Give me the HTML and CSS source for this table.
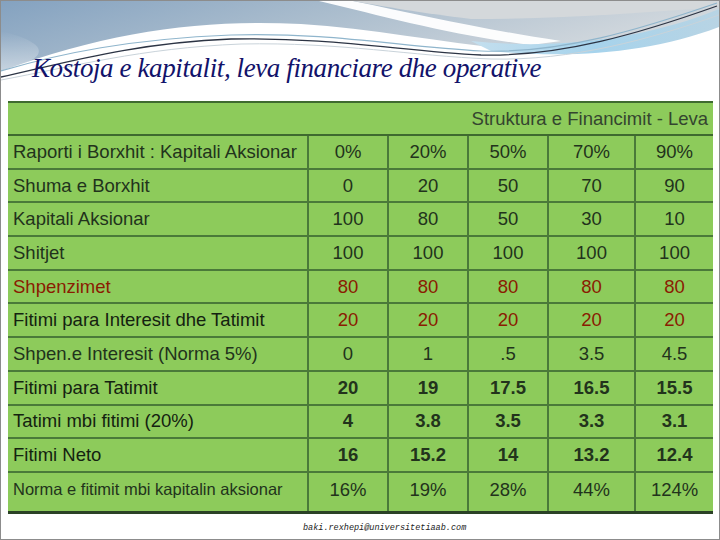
FILE: index.html
```html
<!DOCTYPE html>
<html lang="sq">
<head>
<meta charset="utf-8">
<title>Kostoja e kapitalit</title>
<link rel="stylesheet" href="styles.css">
</head>
<body>
<div class="slide">
  <header class="head">
    <svg class="swoosh" width="718" height="100" viewBox="0 0 718 100" aria-hidden="true">
      <defs>
        <linearGradient id="gTop" x1="0" y1="0" x2="1" y2="0.35">
          <stop offset="0" stop-color="#84a2c0"/>
          <stop offset="0.45" stop-color="#a9bccd"/>
          <stop offset="1" stop-color="#d6dbdf"/>
        </linearGradient>
        <linearGradient id="gFade" x1="0" y1="0" x2="0" y2="1">
          <stop offset="0" stop-color="#ffffff" stop-opacity="0"/>
          <stop offset="1" stop-color="#ffffff" stop-opacity="0.85"/>
        </linearGradient>
        <linearGradient id="gBlue" x1="0" y1="0" x2="1" y2="0">
          <stop offset="0" stop-color="#c4dfee"/>
          <stop offset="0.5" stop-color="#a6d3ec"/>
          <stop offset="1" stop-color="#b8d4e4"/>
        </linearGradient>
      </defs>
      <rect width="718" height="100" fill="#ffffff"/>
      <path d="M0,0 H718 V8 C670,40 600,52 540,50 C460,46 380,28 300,23 C200,18 110,30 0,70 Z" fill="url(#gTop)"/>
      <path d="M0,30 C40,40 60,55 0,70 Z" fill="url(#gFade)" opacity="0.5"/>
      <path d="M318,0 H352 C420,14 480,28 560,40 L530,44 C450,34 385,16 318,0 Z" fill="#ffffff" opacity="0.95"/>
      <path d="M352,0 H718 V6 C640,12 560,18 470,18 C420,12 380,5 352,0 Z" fill="#d4d8db"/>
      <path d="M470,40 C560,50 650,36 718,8 V26 C650,52 570,58 490,50 Z" fill="url(#gBlue)"/>
      <path d="M0,70 C60,52 130,38 230,34 C330,31 400,46 480,50 C560,53 640,28 716,2" fill="none" stroke="#8fb5cc" stroke-width="1.2"/>
      <path d="M0,76 C60,63 130,42 230,38 C330,36 400,50 480,54 C560,56 640,32 716,5" fill="none" stroke="#2c3444" stroke-width="1.3"/>
      <path d="M0,79 C70,66 140,47 240,43 C340,41 410,55 490,58 C570,60 650,38 718,14" fill="none" stroke="#c9d3da" stroke-width="1"/>
    </svg>
    <h1 class="title">Kostoja e kapitalit, leva financiare dhe operative</h1>
  </header>

  <table class="fin">
    <colgroup>
      <col class="c-label">
      <col class="c-n1">
      <col class="c-n2">
      <col class="c-n3">
      <col class="c-n4">
      <col class="c-n5">
    </colgroup>
    <thead>
      <tr><th colspan="6" class="cap">Struktura e Financimit - Leva</th></tr>
    </thead>
    <tbody>
      <tr><td>Raporti i Borxhit : Kapitali Aksionar</td><td>0%</td><td>20%</td><td>50%</td><td>70%</td><td>90%</td></tr>
      <tr><td>Shuma e Borxhit</td><td>0</td><td>20</td><td>50</td><td>70</td><td>90</td></tr>
      <tr><td>Kapitali Aksionar</td><td>100</td><td>80</td><td>50</td><td>30</td><td>10</td></tr>
      <tr><td>Shitjet</td><td>100</td><td>100</td><td>100</td><td>100</td><td>100</td></tr>
      <tr class="red"><td>Shpenzimet</td><td>80</td><td>80</td><td>80</td><td>80</td><td>80</td></tr>
      <tr class="red-num"><td>Fitimi para Interesit dhe Tatimit</td><td>20</td><td>20</td><td>20</td><td>20</td><td>20</td></tr>
      <tr><td>Shpen.e Interesit (Norma 5%)</td><td>0</td><td>1</td><td>.5</td><td>3.5</td><td>4.5</td></tr>
      <tr class="bold"><td>Fitimi para Tatimit</td><td>20</td><td>19</td><td>17.5</td><td>16.5</td><td>15.5</td></tr>
      <tr class="bold"><td>Tatimi mbi fitimi (20%)</td><td>4</td><td>3.8</td><td>3.5</td><td>3.3</td><td>3.1</td></tr>
      <tr class="bold"><td>Fitimi Neto</td><td>16</td><td>15.2</td><td>14</td><td>13.2</td><td>12.4</td></tr>
      <tr class="last"><td>Norma e fitimit mbi kapitalin aksionar</td><td>16%</td><td>19%</td><td>28%</td><td>44%</td><td>124%</td></tr>
    </tbody>
  </table>

  <footer class="foot">baki.rexhepi@universitetiaab.com</footer>
</div>
</body>
</html>
```

FILE: styles.css
```css
html, body {
  margin: 0;
  padding: 0;
  background: #ffffff;
}

.slide {
  width: 720px;
  height: 540px;
  box-sizing: border-box;
  border: 1px solid #8c8c8c;
  display: flex;
  flex-direction: column;
  overflow: hidden;
  background: #ffffff;
}

.head {
  position: relative;
  height: 100px;
  flex: none;
}

.swoosh {
  position: absolute;
  left: 0;
  top: 0;
  display: block;
}

.title {
  position: relative;
  margin: 0;
  padding: 52px 0 0 31px;
  font-family: "Liberation Serif", serif;
  font-style: italic;
  font-weight: normal;
  font-size: 27px;
  letter-spacing: -0.4px;
  line-height: 30px;
  color: #12126a;
  white-space: nowrap;
}

.fin {
  flex: none;
  margin-left: 7px;
  width: 705px;
  table-layout: fixed;
  border-collapse: collapse;
  background: #8dcb5b;
  font-family: "Liberation Sans", Arial, sans-serif;
  font-size: 18.5px;
  color: #22331c;
  border-top: 2px solid #3e6a2f;
  border-bottom: 3px solid #2b4226;
}

.c-label { width: 300px; }
.c-n1, .c-n2, .c-n3 { width: 80px; }
.c-n4 { width: 87px; }
.c-n5 { width: 78px; }

.cap {
  height: 31px;
  padding: 0 5px 0 0;
  text-align: right;
  font-weight: normal;
  color: #34452f;
  border-bottom: 2px solid #3e6a2f;
  vertical-align: middle;
}

.fin td {
  height: 31.7px;
  padding: 0;
  border: 2px solid #4a7a39;
  text-align: center;
  vertical-align: middle;
  white-space: nowrap;
}

.fin td:first-child {
  text-align: left;
  padding-left: 5px;
  border-left: none;
}

.fin td:last-child {
  border-right: none;
}

.fin tr.red td { color: #8a1c02; }
.fin tr.red-num td { color: #8a1c02; }
.fin tr.red-num td:first-child { color: #142210; }
.fin tr.bold td { font-weight: bold; }
.fin tr.bold td:first-child { font-weight: normal; color: #142210; }

.fin tr.last td {
  height: 34px;
  padding-bottom: 4px;
  border-bottom: none;
}

.fin tr.last td:first-child {
  font-size: 16.5px;
}

.foot {
  padding: 8px 0 0 302px;
  font-family: "Liberation Mono", monospace;
  font-style: italic;
  font-size: 8.5px;
  line-height: 12px;
  color: #222222;
}
```
